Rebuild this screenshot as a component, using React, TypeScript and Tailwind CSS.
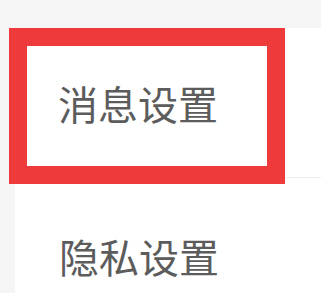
export default function App() {
  return (
    <div
      className="relative h-[293px] w-[321px] overflow-hidden bg-[#f5f5f5] pl-[15px] pt-[28px]"
      style={{ fontFamily: '"Noto Sans CJK SC", "Noto Sans", sans-serif' }}
    >
      <div className="bg-white">
        <div className="flex h-[150px] items-center border-b border-[#eeeeee] pl-[43px]">
          <span className="text-[40px] leading-none text-[#5c5c5c]">消息设置</span>
        </div>
        <div className="flex h-[155px] items-center pl-[44px]">
          <span className="text-[40px] leading-none text-[#5c5c5c]">隐私设置</span>
        </div>
      </div>
      {/* highlight annotation */}
      <div className="pointer-events-none absolute left-[9px] top-[28px] h-[156px] w-[276px] border-[18px] border-[#ef3a3c]" />
    </div>
  );
}
